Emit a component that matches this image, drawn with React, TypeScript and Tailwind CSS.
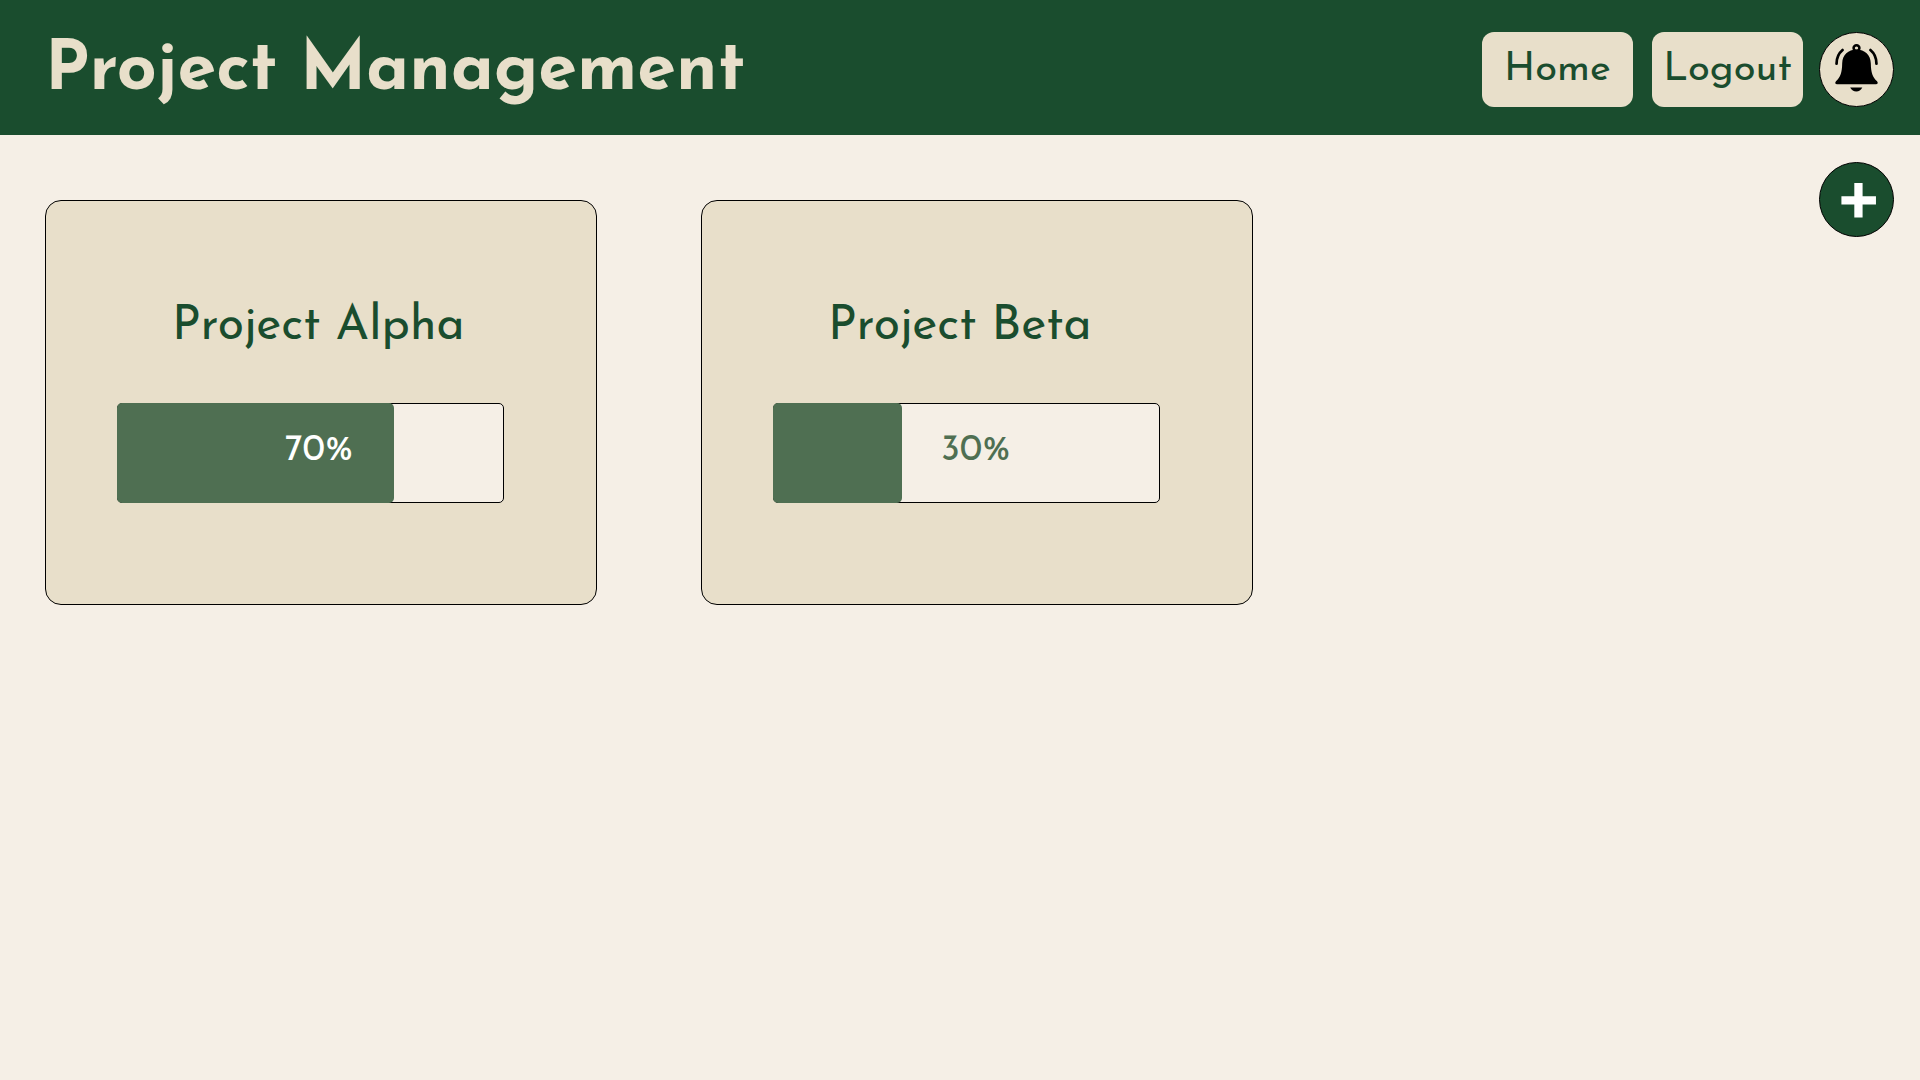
type Project = { name: string; percent: number; filled: number; labelClass: string };

// `filled` is the share of the track that the bar covers.
const projects: Project[] = [
  { name: "Project Alpha", percent: 70, filled: 71.6, labelClass: "text-white" },
  { name: "Project Beta", percent: 30, filled: 33.4, labelClass: "text-[#4F6F52]" },
];

function BellIcon() {
  return (
    <svg viewBox="0 0 75 75" className="size-full" aria-hidden="true">
      <circle cx="37.5" cy="15.5" r="3" fill="none" stroke="black" strokeWidth="2.6" />
      <path
        d="M37.5 17C29 17 23 22.5 22.8 31C22.6 41 21 45 16.4 49.6C15 51.2 15.6 52.7 17.6 52.7H57.4C59.4 52.7 60 51.2 58.6 49.6C54 45 52.4 41 52.2 31C52 22.5 46 17 37.5 17Z"
        fill="black"
      />
      <path d="M31 56H43.5C42 58.8 40 60 37.3 60C34.6 60 32.5 58.8 31 56Z" fill="black" />
      <path d="M23.2 17.5C19 21 17 25.5 17 31.5" fill="none" stroke="black" strokeWidth="2.8" strokeLinecap="round" />
      <path d="M51.8 17.5C56 21 58 25.5 58 31.5" fill="none" stroke="black" strokeWidth="2.8" strokeLinecap="round" />
    </svg>
  );
}

function PlusIcon() {
  return (
    <svg viewBox="0 0 75 75" className="size-full" aria-hidden="true">
      <path d="M39.5 20.5V56M22 38.5H57.5" stroke="white" strokeWidth="8.5" />
    </svg>
  );
}

function ProjectCard({ name, percent, filled, labelClass }: Project) {
  return (
    <article className="w-full max-w-[552px] rounded-2xl border border-black bg-[#E8DFCA] pt-[98px] pb-[101px]">
      <h2 className="pl-[126px] text-5xl leading-[56px] text-[#1A4D2E]">{name}</h2>
      <div
        role="progressbar"
        aria-label={name}
        aria-valuenow={percent}
        aria-valuemin={0}
        aria-valuemax={100}
        className="relative mt-12 mr-[92px] ml-[71px] h-[100px] rounded-[5px] border border-black bg-[#F5EFE6]"
      >
        <div className="absolute -inset-px">
          <div className="h-full rounded-[5px] bg-[#4F6F52]" style={{ width: `${filled}%` }} />
        </div>
        <span className={`absolute top-[27px] left-[167px] text-4xl leading-10 ${labelClass}`}>{percent}%</span>
      </div>
    </article>
  );
}

export default function App() {
  return (
    <div className="min-h-screen bg-[#F5EFE6] font-['Josefin_Sans',Lato,sans-serif]">
      <header className="flex min-h-[135px] items-center justify-between bg-[#1A4D2E] pr-[26px] pl-[45px]">
        <h1 className="pt-2 text-[70px] leading-[88px] font-bold text-[#E8DFCA]">Project Management</h1>
        <nav className="flex items-center gap-[19px] pt-1">
          <a href="#home" className="flex h-[75px] w-[151px] items-center justify-center rounded-xl bg-[#E8DFCA] text-[40px] leading-none text-[#1A4D2E]">
            Home
          </a>
          <a href="#logout" className="flex h-[75px] w-[151px] items-center justify-center rounded-xl bg-[#E8DFCA] text-[40px] leading-none text-[#1A4D2E]">
            Logout
          </a>
          <button type="button" aria-label="Notifications" className="-ml-[3px] size-[75px] rounded-full border border-black bg-[#E8DFCA]">
            <BellIcon />
          </button>
        </nav>
      </header>
      <main className="flex items-start justify-between pt-[27px] pr-[26px] pl-[45px]">
        <section aria-label="Projects" className="flex flex-1 gap-[104px] pt-[38px]">
          {projects.map((project) => (
            <ProjectCard key={project.name} {...project} />
          ))}
        </section>
        <button type="button" aria-label="Add project" className="size-[75px] shrink-0 rounded-full border border-black bg-[#1A4D2E]">
          <PlusIcon />
        </button>
      </main>
    </div>
  );
}
